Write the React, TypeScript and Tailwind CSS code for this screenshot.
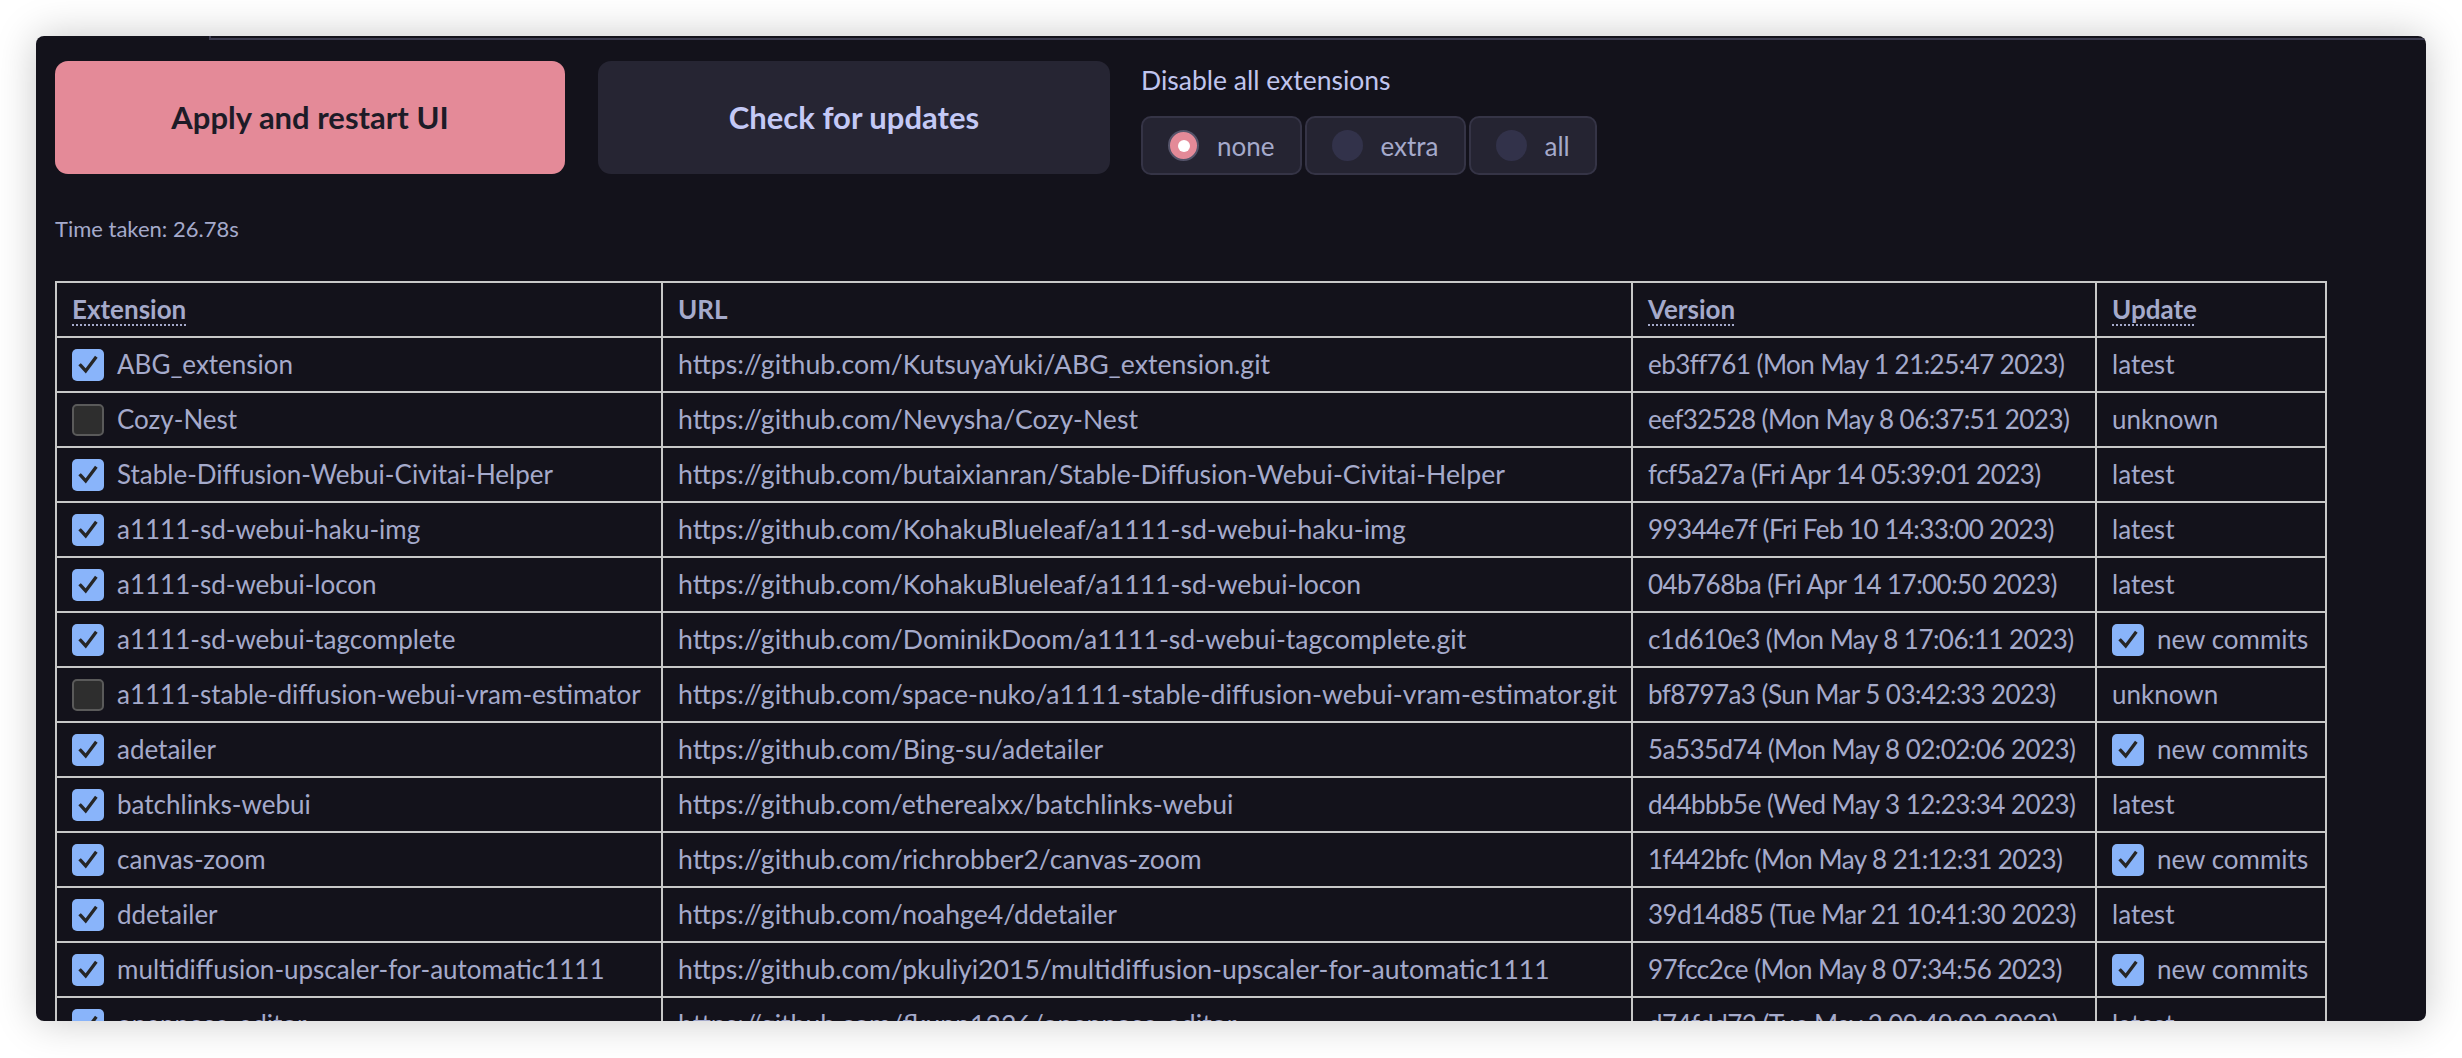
import React from 'react'

type Row = {
  name: string
  enabled: boolean
  url: string
  version: string
  update: 'latest' | 'unknown' | 'new'
}

const rows: Row[] = [
  { name: 'ABG_extension', enabled: true, url: 'https://github.com/KutsuyaYuki/ABG_extension.git', version: 'eb3ff761 (Mon May 1 21:25:47 2023)', update: 'latest' },
  { name: 'Cozy-Nest', enabled: false, url: 'https://github.com/Nevysha/Cozy-Nest', version: 'eef32528 (Mon May 8 06:37:51 2023)', update: 'unknown' },
  { name: 'Stable-Diffusion-Webui-Civitai-Helper', enabled: true, url: 'https://github.com/butaixianran/Stable-Diffusion-Webui-Civitai-Helper', version: 'fcf5a27a (Fri Apr 14 05:39:01 2023)', update: 'latest' },
  { name: 'a1111-sd-webui-haku-img', enabled: true, url: 'https://github.com/KohakuBlueleaf/a1111-sd-webui-haku-img', version: '99344e7f (Fri Feb 10 14:33:00 2023)', update: 'latest' },
  { name: 'a1111-sd-webui-locon', enabled: true, url: 'https://github.com/KohakuBlueleaf/a1111-sd-webui-locon', version: '04b768ba (Fri Apr 14 17:00:50 2023)', update: 'latest' },
  { name: 'a1111-sd-webui-tagcomplete', enabled: true, url: 'https://github.com/DominikDoom/a1111-sd-webui-tagcomplete.git', version: 'c1d610e3 (Mon May 8 17:06:11 2023)', update: 'new' },
  { name: 'a1111-stable-diffusion-webui-vram-estimator', enabled: false, url: 'https://github.com/space-nuko/a1111-stable-diffusion-webui-vram-estimator.git', version: 'bf8797a3 (Sun Mar 5 03:42:33 2023)', update: 'unknown' },
  { name: 'adetailer', enabled: true, url: 'https://github.com/Bing-su/adetailer', version: '5a535d74 (Mon May 8 02:02:06 2023)', update: 'new' },
  { name: 'batchlinks-webui', enabled: true, url: 'https://github.com/etherealxx/batchlinks-webui', version: 'd44bbb5e (Wed May 3 12:23:34 2023)', update: 'latest' },
  { name: 'canvas-zoom', enabled: true, url: 'https://github.com/richrobber2/canvas-zoom', version: '1f442bfc (Mon May 8 21:12:31 2023)', update: 'new' },
  { name: 'ddetailer', enabled: true, url: 'https://github.com/noahge4/ddetailer', version: '39d14d85 (Tue Mar 21 10:41:30 2023)', update: 'latest' },
  { name: 'multidiffusion-upscaler-for-automatic1111', enabled: true, url: 'https://github.com/pkuliyi2015/multidiffusion-upscaler-for-automatic1111', version: '97fcc2ce (Mon May 8 07:34:56 2023)', update: 'new' },
  { name: 'openpose-editor', enabled: true, url: 'https://github.com/fkunn1326/openpose-editor', version: 'd74fdd72 (Tue May 2 09:49:03 2023)', update: 'latest' },
]

function Checkbox({ checked }: { checked: boolean }) {
  if (!checked) {
    return <span className="inline-block w-[32px] h-[32px] shrink-0 rounded-[5px] bg-[#2e2e2e] border-2 border-[#5a5a5a]" />
  }
  return (
    <span className="inline-flex items-center justify-center w-[32px] h-[32px] shrink-0 rounded-[5px] bg-[#89b4fa]">
      <svg width="22" height="22" viewBox="0 0 24 24" fill="none">
        <path d="M4 12.5 L9.5 18.5 L20 4.5" stroke="#262626" strokeWidth="3.6" strokeLinecap="square" />
      </svg>
    </span>
  )
}

function Radio({ label, checked }: { label: string; checked: boolean }) {
  return (
    <div className="flex items-center gap-[18px] h-[59px] px-[25px] rounded-[10px] bg-[#252432] border-2 border-[#353446]">
      {checked ? (
        <span className="flex items-center justify-center w-[31px] h-[31px] rounded-full bg-[#e48a98] border-2 border-[#55546a]">
          <span className="w-[12px] h-[12px] rounded-full bg-white" />
        </span>
      ) : (
        <span className="w-[31px] h-[31px] rounded-full bg-[#32324a]" />
      )}
      <span className="text-[26px] leading-none text-[#a5aacb]">{label}</span>
    </div>
  )
}

export default function App() {
  return (
    <div className="min-h-screen bg-white p-[36px]" style={{ fontFamily: 'Lato, "Noto Sans", sans-serif' }}>
      <div className="w-[2390px] h-[985px] overflow-hidden rounded-[8px] bg-[#13121b] shadow-[0_0_40px_rgba(0,0,0,0.22)]">
        <div className="flex h-[4px]">
          <div className="w-[173px]" />
          <div className="flex-1 border-l-2 border-b-2 border-[#3a3a4e]" />
        </div>

        <div className="px-[19px] pt-[21px]">
          <div className="flex items-start">
            <button className="w-[510px] h-[113px] rounded-[13px] bg-[#e48a98] text-[31px] font-bold text-[#1d1b27]">
              Apply and restart UI
            </button>
            <button className="ml-[33px] w-[512px] h-[113px] rounded-[13px] bg-[#262533] text-[31px] font-bold text-[#c4c9f6]">
              Check for updates
            </button>
            <div className="ml-[31px] flex flex-col">
              <div className="mt-[4px] h-[30px] text-[26.5px] leading-[30px] text-[#c0c5ee]">Disable all extensions</div>
              <div className="mt-[21px] flex gap-[3px]">
                <Radio label="none" checked />
                <Radio label="extra" checked={false} />
                <Radio label="all" checked={false} />
              </div>
            </div>
          </div>

          <div className="mt-[42px] text-[22px] leading-[24px] text-[#a5aacb]">Time taken: 26.78s</div>

          <table className="mt-[40px] table-fixed border-collapse w-[2270px] text-[26px] text-[#a5aacb]">
            <colgroup>
              <col className="w-[606px]" />
              <col className="w-[970px]" />
              <col className="w-[464px]" />
              <col className="w-[230px]" />
            </colgroup>
            <thead>
              <tr className="h-[55px]">
                <th className="border-2 border-[#c8c8c8] px-[15px] text-left font-bold">
                  <span className="underline decoration-dotted decoration-2 underline-offset-[5px]">Extension</span>
                </th>
                <th className="border-2 border-[#c8c8c8] px-[15px] text-left font-bold">URL</th>
                <th className="border-2 border-[#c8c8c8] px-[15px] text-left font-bold">
                  <span className="underline decoration-dotted decoration-2 underline-offset-[5px]">Version</span>
                </th>
                <th className="border-2 border-[#c8c8c8] px-[15px] text-left font-bold">
                  <span className="underline decoration-dotted decoration-2 underline-offset-[5px]">Update</span>
                </th>
              </tr>
            </thead>
            <tbody>
              {rows.map((r) => (
                <tr key={r.name} className="h-[55px]">
                  <td className="border-2 border-[#c8c8c8] px-[15px] whitespace-nowrap">
                    <div className="flex items-center gap-[13px]">
                      <Checkbox checked={r.enabled} />
                      <span>{r.name}</span>
                    </div>
                  </td>
                  <td className="border-2 border-[#c8c8c8] px-[15px] whitespace-nowrap text-[26.6px]">{r.url}</td>
                  <td className="border-2 border-[#c8c8c8] px-[15px] whitespace-nowrap tracking-[-0.55px]">{r.version}</td>
                  <td className="border-2 border-[#c8c8c8] px-[15px] whitespace-nowrap">
                    {r.update === 'new' ? (
                      <div className="flex items-center gap-[13px]">
                        <Checkbox checked />
                        <span>new commits</span>
                      </div>
                    ) : (
                      r.update
                    )}
                  </td>
                </tr>
              ))}
            </tbody>
          </table>
        </div>
      </div>
    </div>
  )
}
